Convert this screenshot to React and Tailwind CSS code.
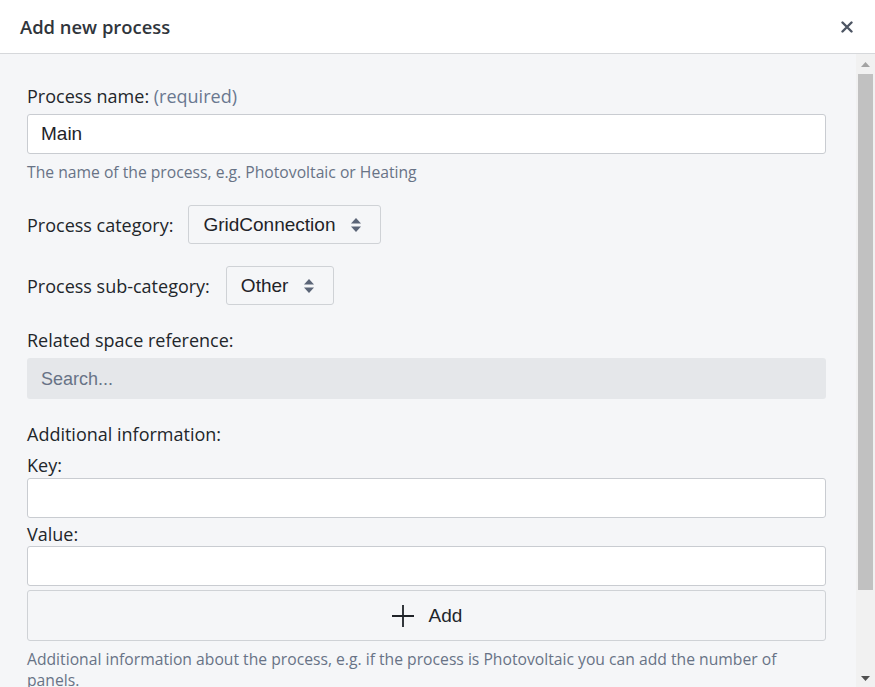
import React from 'react';

const labelFont = { fontFamily: '"Open Sans", "Noto Sans", sans-serif' };

function SortIcon() {
  return (
    <svg width="12" height="16" viewBox="0 0 12 16" className="text-[#5b6577]">
      <path d="M6 1 L11 6.5 H1 Z" fill="currentColor" strokeLinejoin="round" />
      <path d="M6 15 L11 9.5 H1 Z" fill="currentColor" strokeLinejoin="round" />
    </svg>
  );
}

function SelectBox({ value }) {
  return (
    <div className="flex items-center gap-[15px] h-[39px] pl-[14px] pr-[18px] bg-[#f5f6f8] border border-[#cfd2d6] rounded-[3px] text-[19px] text-[#1f2328] font-['Liberation_Sans',Arial,sans-serif]">
      <span>{value}</span>
      <SortIcon />
    </div>
  );
}

function TextInput({ value = '' }) {
  return (
    <div className="h-[40px] w-full bg-white border border-[#c9ccd1] rounded-[3px] px-[13px] flex items-center text-[19px] text-[#1f2328] font-['Liberation_Sans',Arial,sans-serif]">
      {value}
    </div>
  );
}

export default function App() {
  return (
    <div className="w-[875px] h-[687px] bg-[#f5f6f8] flex flex-col overflow-hidden" style={labelFont}>
      {/* Header */}
      <div className="h-[54px] shrink-0 bg-white border-b border-[#d6d8db] flex items-center justify-between pl-[20px] pr-[22px]">
        <span className="text-[18.4px] font-semibold text-[#30353c]">Add new process</span>
        <svg width="12" height="12" viewBox="0 0 12 12" className="text-[#4d5563]">
          <path d="M1.5 1.5 L10.5 10.5 M10.5 1.5 L1.5 10.5" stroke="currentColor" strokeWidth="2.4" strokeLinecap="round" />
        </svg>
      </div>

      {/* Body */}
      <div className="flex flex-1 min-h-0">
        <div className="flex-1 overflow-hidden pl-[27px] pr-[30px] pt-[30px] text-[#22262b] text-[18px] leading-[24px]">
          <div>
            Process name: <span className="text-[#6a7890]">(required)</span>
          </div>
          <div className="mt-[6px]">
            <TextInput value="Main" />
          </div>
          <div className="mt-[7px] text-[15.7px] leading-[22px] text-[#687386]">
            The name of the process, e.g. Photovoltaic or Heating
          </div>

          <div className="mt-[22px] flex items-center gap-[15px]">
            <span>Process category:</span>
            <SelectBox value="GridConnection" />
          </div>

          <div className="mt-[22px] flex items-center gap-[16px]">
            <span>Process sub-category:</span>
            <SelectBox value="Other" />
          </div>

          <div className="mt-[23px]">Related space reference:</div>
          <div className="mt-[6px] h-[41px] bg-[#e5e7ea] rounded-[3px] flex items-center px-[14px] text-[18px] text-[#687386] font-['Liberation_Sans',Arial,sans-serif]">
            Search...
          </div>

          <div className="mt-[23px]">Additional information:</div>
          <div className="mt-[7px]">Key:</div>
          <div className="mt-[1px]">
            <TextInput />
          </div>
          <div className="mt-[4px]">Value:</div>
          <div>
            <TextInput />
          </div>
          <div className="mt-[4px] h-[51px] bg-[#f5f6f8] border border-[#cfd2d6] rounded-[3px] flex items-center justify-center gap-[14px] text-[#22262b]">
            <svg width="24" height="24" viewBox="0 0 24 24">
              <path d="M12 1 V23 M1 12 H23" stroke="#1f2328" strokeWidth="1.8" />
            </svg>
            <span className="text-[19px] font-['Liberation_Sans',Arial,sans-serif]">Add</span>
          </div>
          <div className="mt-[8px] text-[15.7px] leading-[21px] text-[#687386]">
            Additional information about the process, e.g. if the process is Photovoltaic you can add the number of panels.
          </div>
        </div>

        {/* Scrollbar */}
        <div className="w-[19px] shrink-0 bg-[#f1f1f1] flex flex-col items-center">
          <div className="h-[20px] flex items-center justify-center">
            <svg width="9" height="5" viewBox="0 0 9 5"><path d="M4.5 0 L9 5 H0 Z" fill="#a3a3a3" /></svg>
          </div>
          <div className="w-[15px] h-[516px] bg-[#c1c1c1]" />
          <div className="flex-1" />
          <div className="h-[18px] flex items-center justify-center">
            <svg width="9" height="5" viewBox="0 0 9 5"><path d="M0 0 H9 L4.5 5 Z" fill="#505050" /></svg>
          </div>
        </div>
      </div>
    </div>
  );
}
